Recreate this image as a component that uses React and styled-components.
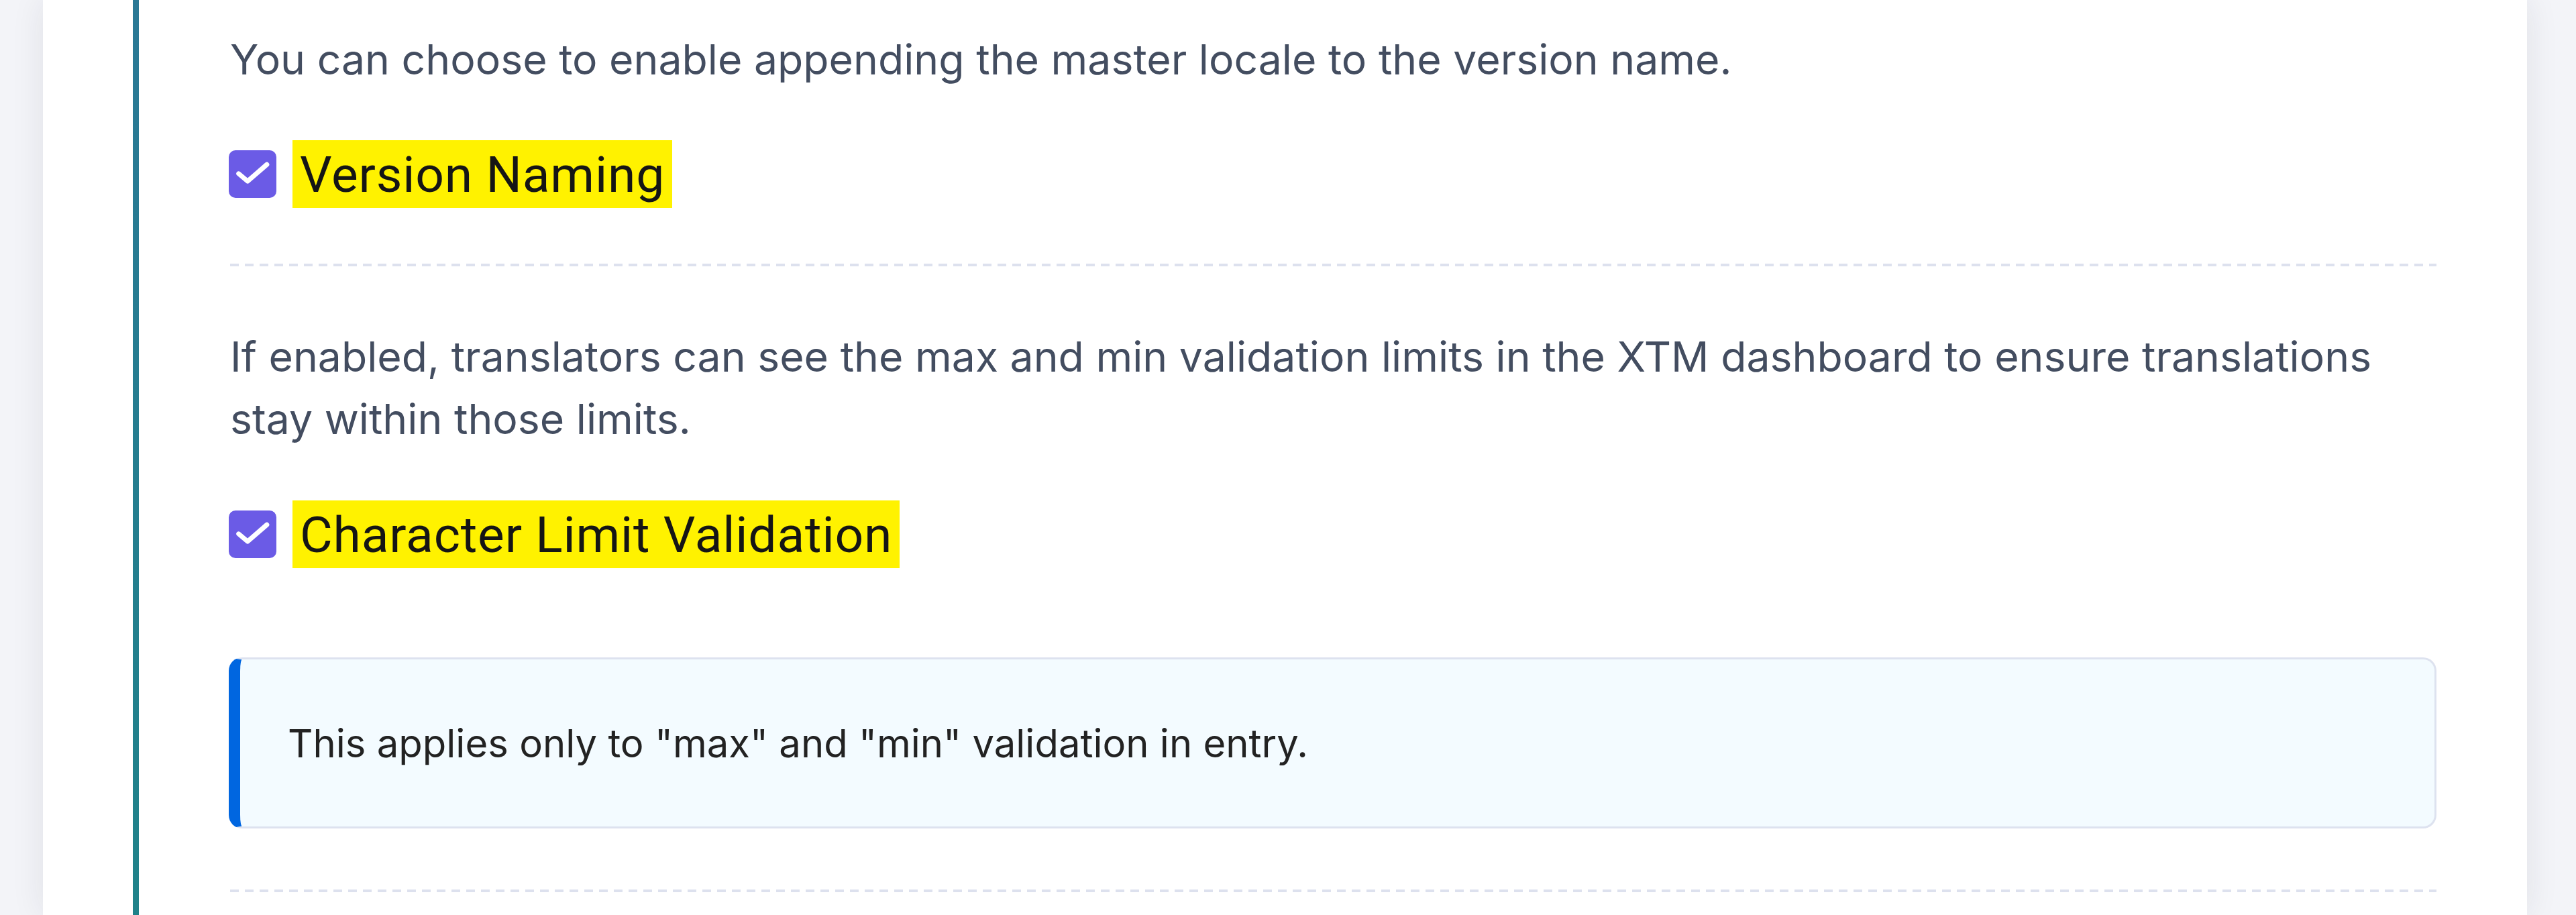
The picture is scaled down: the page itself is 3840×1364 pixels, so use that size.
import styled, { createGlobalStyle } from "styled-components";

const GlobalStyle = createGlobalStyle`
	html, body {
		margin: 0;
		background: #f3f4f8;
	}
	* {
		box-sizing: border-box;
	}
`;

function Check() {
	return (
		<CheckBox>
			<svg viewBox="0 0 24 24" fill="none">
				<path
					d="M5 11.8 L9.5 15.6 L19.2 7.2"
					stroke="#fff"
					strokeWidth="2.4"
					strokeLinecap="round"
					strokeLinejoin="round"
				/>
			</svg>
		</CheckBox>
	);
}

export default function App() {
	return (
		<>
			<GlobalStyle />
			<Page>
				<Card>
					<Section>
						<Paragraph>
							You can choose to enable appending the master locale to the version name.
						</Paragraph>
						<CheckRow $top="74">
							<Check />
							<Highlight>Version Naming</Highlight>
						</CheckRow>
						<Divider $top="83" />
						<Paragraph $top="88">
							If enabled, translators can see the max and min validation limits in the XTM dashboard to ensure translations stay within those limits.
						</Paragraph>
						<CheckRow $top="75">
							<Check />
							<Highlight>Character Limit Validation</Highlight>
						</CheckRow>
						<InfoBox>
							This applies only to "max" and "min" validation in entry.
						</InfoBox>
						<Divider $top="91" />
					</Section>
				</Card>
			</Page>
		</>
	);
}

const Page = styled.div`
	display: flex;
	min-height: 100vh;
	padding: 0 73px 0 64px;
`;

const Card = styled.div`
	flex: 1;
	background: #ffffff;
	box-shadow: 0 0 46px rgba(30, 35, 60, 0.09);
	padding: 0 135px 0 134px;
	display: flex;
`;

const Section = styled.div`
	flex: 1;
	border-left: 9px solid;
	border-image: linear-gradient(to bottom, #2a7895, #1f8289) 1;
	padding: 42px 0 0 136px;
	font-family: Inter, "Noto Sans", sans-serif;
`;

const Paragraph = styled.p`
	margin: ${(p) => p.$top || 0}px 0 0;
	font-size: 62.5px;
	line-height: 93px;
	color: #434d60;
`;

const CheckRow = styled.div`
	display: flex;
	align-items: center;
	gap: 24px;
	margin-top: ${(p) => p.$top}px;
	margin-left: -2px;
`;

const CheckBox = styled.span`
	width: 71px;
	height: 71px;
	border-radius: 10px;
	background: #6b5be6;
	display: flex;
	align-items: center;
	justify-content: center;
	flex-shrink: 0;

	svg {
		width: 71px;
		height: 71px;
	}
`;

const Highlight = styled.span`
	display: flex;
	align-items: center;
	height: 101px;
	padding: 0 11px;
	background: #fff200;
	font-family: Roboto, "Liberation Sans", sans-serif;
	font-size: 75px;
	letter-spacing: 0.8px;
	color: #151515;
`;

const Divider = styled.div`
	height: 4px;
	margin-top: ${(p) => p.$top}px;
	background: repeating-linear-gradient(
		to right,
		#dde1ee 0,
		#dde1ee 13px,
		transparent 13px,
		transparent 22px
	);
`;

const InfoBox = styled.div`
	margin-top: 133px;
	margin-left: -2px;
	height: 255px;
	display: flex;
	align-items: center;
	padding-left: 71px;
	background: #f3fbff;
	border: 3px solid #dde2ef;
	border-left: 17px solid #0066e0;
	border-radius: 20px;
	font-size: 58px;
	color: #222222;
`;
